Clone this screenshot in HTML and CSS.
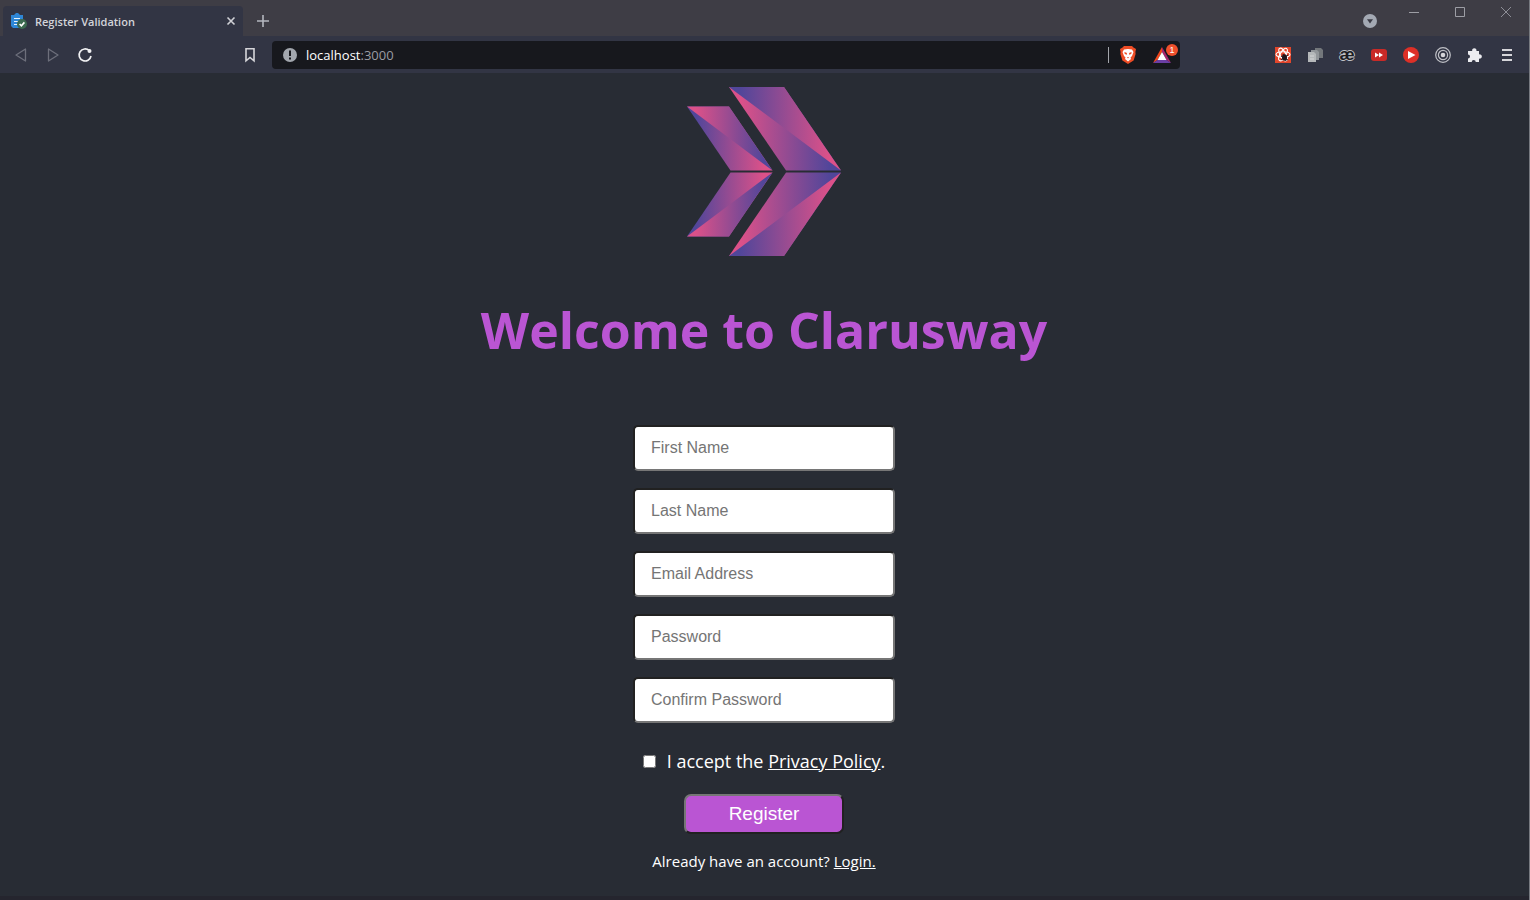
FILE: index.html
```html
<!DOCTYPE html>
<html lang="en">
<head>
<meta charset="utf-8">
<meta name="viewport" content="width=device-width, initial-scale=1">
<title>Register Validation</title>
<link rel="stylesheet" href="styles.css">
</head>
<body>
<div class="window">
  <header class="tabstrip">
    <div class="tab">
      <svg class="tab-icon" width="18" height="18" viewBox="0 0 18 18" aria-hidden="true">
        <path d="M1 3h3l2-2h2l2 2h3v13H3L1 14z" fill="#2f87d6"/>
        <path d="M4 6h6v1H4zM4 9h5v1H4zM4 12h4v1H4z" fill="#e8f2fb"/>
        <circle cx="12" cy="12" r="5" fill="#3c6b50"/>
        <path d="M9.600 12l1.800 1.800 3-3.400" fill="none" stroke="#fff" stroke-width="1.600"/>
      </svg>
      <span class="tab-title">Register Validation</span>
      <button class="icon-button tab-close" aria-label="Close tab">
        <svg width="10" height="10" viewBox="0 0 10 10"><path d="M1.500 1.500l7 7M8.500 1.500l-7 7" stroke="#d0d1d6" stroke-width="1.600"/></svg>
      </button>
    </div>
    <button class="icon-button new-tab" aria-label="New tab">
      <svg width="12" height="12" viewBox="0 0 12 12"><path d="M6 0v12M0 6h12" stroke="#b4b7bf" stroke-width="1.600"/></svg>
    </button>
    <button class="icon-button tab-search" aria-label="Search tabs">
      <svg width="14" height="14" viewBox="0 0 14 14"><circle cx="7" cy="7" r="7" fill="#a3a9b3"/><path d="M4 5.300h6L7 9.500z" fill="#3a3b45"/></svg>
    </button>
    <div class="window-controls">
      <button class="icon-button" aria-label="Minimize"><svg width="12" height="12" viewBox="0 0 12 12"><path d="M1 6.500h10" stroke="#9d9ea5"/></svg></button>
      <button class="icon-button" aria-label="Maximize"><svg width="12" height="12" viewBox="0 0 12 12"><path d="M1.500 1.500h9v9h-9z" fill="none" stroke="#9d9ea5"/></svg></button>
      <button class="icon-button" aria-label="Close window"><svg width="12" height="12" viewBox="0 0 12 12"><path d="M1 1l10 10M11 1L1 11" stroke="#8d8e96"/></svg></button>
    </div>
  </header>

  <nav class="toolbar" aria-label="Browser toolbar">
    <button class="icon-button tool" aria-label="Back"><svg width="14" height="16" viewBox="0 0 14 16"><path d="M11.500 2v12L2 8z" fill="none" stroke="#6d6f7b" stroke-width="1.300" stroke-linejoin="round"/></svg></button>
    <button class="icon-button tool" aria-label="Forward"><svg width="14" height="16" viewBox="0 0 14 16"><path d="M2.500 2v12L12 8z" fill="none" stroke="#6d6f7b" stroke-width="1.300" stroke-linejoin="round"/></svg></button>
    <button class="icon-button tool" aria-label="Reload"><svg width="16" height="16" viewBox="0 0 16 16"><path d="M12.300 3.700A6 6 0 1 0 14 9" fill="none" stroke="#f1f1f3" stroke-width="1.700"/><circle cx="12.500" cy="4" r="2" fill="#f1f1f3"/></svg></button>
    <button class="icon-button tool bookmark" aria-label="Bookmark"><svg width="12" height="16" viewBox="0 0 12 16"><path d="M2 1.800h8v12L6 10.500 2 13.800z" fill="none" stroke="#d6d6da" stroke-width="1.600"/></svg></button>
    <div class="address">
      <svg width="14" height="14" viewBox="0 0 14 14" aria-hidden="true"><circle cx="7" cy="7" r="7" fill="#a3a7ae"/><path d="M7 2.500v5.500M7 9.500v2" stroke="#17181d" stroke-width="2"/></svg>
      <a class="url" href="#"><span class="host">localhost</span>:3000</a>
      <span class="divider"></span>
      <button class="icon-button shield" aria-label="Shields">
        <svg width="16" height="18" viewBox="0 0 16 18"><path d="M4 0h8l1.500 1.500L16 3l-.6 3 .2 2-2 6.500L8 18l-5.600-3.500-2-6.500.2-2L0 3l2.500-1.500z" fill="#ed4c25"/><path d="M4 3.500L8 3l4 .5L13.500 6 12 10l-1.500 1.500.5 1.500L8 15.500 5 13l.5-1.500L4 10 2.500 6z" fill="#fff"/><path d="M4.500 6L7 7 6.500 9l-2-1.500zM11.500 6L9 7 9.500 9l2-1.500zM7 11h2l-1 1.500z" fill="#ed4c25"/></svg>
      </button>
      <button class="icon-button rewards" aria-label="Rewards, 1 new">
        <svg width="18" height="16" viewBox="0 0 18 16"><path d="M9 0L0 16l4.500-3L9 5z" fill="#f0471c"/><path d="M9 0l9 16-4.500-3L9 5z" fill="#a6266e"/><path d="M0 16h18l-4.500-3h-9z" fill="#6b3fa4"/><path d="M9 5l4.500 8h-9z" fill="#fff"/></svg>
        <span class="badge">1</span>
      </button>
    </div>
    <div class="extensions">
      <button class="icon-button tool" aria-label="React tools"><svg width="16" height="16" viewBox="0 0 16 16"><path d="M0 0h16v16H0z" fill="#e2462b"/><g fill="none" stroke="#fff" stroke-width="1.100"><ellipse cx="8" cy="7.500" rx="7" ry="2.800"/><ellipse cx="8" cy="7.500" rx="7" ry="2.800" transform="rotate(60 8 7.500)"/><ellipse cx="8" cy="7.500" rx="7" ry="2.800" transform="rotate(120 8 7.500)"/></g><ellipse cx="9.500" cy="10.500" rx="2.500" ry="3.200" fill="#20151a"/><path d="M6 9l7 4M6 13l7-5M8 7l3 7" stroke="#20151a"/></svg></button>
      <button class="icon-button tool" aria-label="Copy pages"><svg width="16" height="16" viewBox="0 0 16 16"><path d="M8 1h6l2 2v8H8z" fill="#73777b"/><path d="M4 3h6l2 2v8H4z" fill="#92969a"/><path d="M1 5h6l2 2v8H1z" fill="#b5b8ba"/><path d="M3 9h4M3 12h4" stroke="#d5d6d7"/></svg></button>
      <button class="icon-button tool ligature" aria-label="Text tools">æ</button>
      <button class="icon-button tool" aria-label="Fast forward"><svg width="16" height="12" viewBox="0 0 16 12"><rect width="16" height="12" rx="3" fill="#c92a27"/><path d="M4 3.500l4 2.500-4 2.500zM8 3.500l4 2.500-4 2.500z" fill="#fff"/></svg></button>
      <button class="icon-button tool" aria-label="Video player"><svg width="16" height="16" viewBox="0 0 16 16"><circle cx="8" cy="8" r="8" fill="#dd3027"/><path d="M5 4l7.500 4L5 12z" fill="#fff"/></svg></button>
      <button class="icon-button tool" aria-label="Tracker"><svg width="16" height="16" viewBox="0 0 16 16"><g fill="none" stroke="#bfc0c6" stroke-width="1.200"><circle cx="8" cy="8" r="7.300"/><circle cx="8" cy="8" r="4.600"/></g><circle cx="8" cy="8" r="2.300" fill="#d5d5d9"/></svg></button>
      <button class="icon-button tool" aria-label="Extensions"><svg width="16" height="16" viewBox="0 0 16 16"><path d="M1 4h4.200a2.200 2.200 0 1 1 4.200 0H12v3.400a2.200 2.200 0 1 1 0 4.200V15H8.700a2 2 0 0 0-4 0H1v-3.600a2 2 0 0 0 0-4z" fill="#ececf0"/></svg></button>
      <button class="icon-button tool" aria-label="Menu"><svg width="10" height="12" viewBox="0 0 10 12"><path d="M0 1h10M0 6h10M0 11h10" stroke="#d6d6da" stroke-width="1.800"/></svg></button>
    </div>
  </nav>

  <main class="page">
    <svg class="logo" width="154" height="170" viewBox="0 0 154 170" role="img" aria-label="Clarusway">
      <defs>
        <linearGradient id="cool-warm"><stop offset=".1" stop-color="#51469a"/><stop offset=".9" stop-color="#dc5189"/></linearGradient>
        <linearGradient id="warm-cool"><stop offset=".1" stop-color="#dc5189"/><stop offset=".9" stop-color="#51469a"/></linearGradient>
        <g id="upper">
          <path d="M42 0h55l57 83.500H99z" fill="url(#warm-cool)"/>
          <path d="M42 0h55l57 83.500z" fill="url(#cool-warm)"/>
          <path d="M0 19.500h42l43.500 64h-42z" fill="url(#cool-warm)"/>
          <path d="M0 19.500h42l43.500 64z" fill="url(#warm-cool)"/>
        </g>
      </defs>
      <use href="#upper"/>
      <use href="#upper" transform="matrix(1 0 0 -1 0 169)"/>
    </svg>
    <h1 class="title">Welcome to Clarusway</h1>
    <form class="form">
      <input class="field" type="text" placeholder="First Name" aria-label="First Name">
      <input class="field" type="text" placeholder="Last Name" aria-label="Last Name">
      <input class="field" type="email" placeholder="Email Address" aria-label="Email Address">
      <input class="field" type="password" placeholder="Password" aria-label="Password">
      <input class="field" type="password" placeholder="Confirm Password" aria-label="Confirm Password">
      <div class="accept">
        <input class="check" type="checkbox" id="accept">
        <label for="accept">I accept the <a href="#">Privacy Policy</a>.</label>
      </div>
      <button class="register" type="submit">Register</button>
    </form>
    <p class="login">Already have an account? <a href="#">Login.</a></p>
  </main>
</div>
</body>
</html>
```
FILE: styles.css
```css
* {
  box-sizing: border-box;
}

body {
  margin: 0;
  background: #282c34;
  color: #fff;
  font-family: "Open Sans", "Noto Sans", sans-serif;
}

.window {
  display: flex;
  flex-direction: column;
  min-height: 100vh;
  border-right: 1px solid #777a80;
}

.icon-button {
  display: flex;
  align-items: center;
  justify-content: center;
  padding: 0;
  border: 0;
  background: none;
  color: inherit;
}

.tabstrip {
  display: flex;
  height: 36px;
  padding-left: 3px;
  background: #3e3d45;
}

.tab {
  display: flex;
  align-items: center;
  width: 240px;
  margin-top: 6px;
  padding: 0 7px;
  border-radius: 4px 4px 0 0;
  background: #323544;
}

.tab-title {
  flex: 1;
  margin-left: 7px;
  color: #d3d4da;
  font-size: 11px;
  font-weight: 600;
}

.new-tab {
  width: 40px;
  padding-top: 6px;
}

.tab-search {
  width: 42px;
  margin-left: auto;
  padding-top: 6px;
}

.window-controls {
  display: flex;
  height: 24px;
}

.window-controls .icon-button {
  width: 46px;
}

.toolbar {
  display: flex;
  align-items: center;
  height: 37px;
  padding: 0 6px 0 5px;
  background: #323544;
}

.tool {
  width: 32px;
  height: 32px;
}

.bookmark {
  margin-left: 133px;
}

.address {
  display: flex;
  flex: 1;
  align-items: center;
  height: 28px;
  margin: 0 87px 0 6px;
  padding: 0 8px 0 11px;
  border-radius: 4px;
  background: #17181d;
}

.url {
  flex: 1;
  margin-left: 9px;
  color: #9a9ca3;
  font-size: 13px;
  text-decoration: none;
}

.host {
  color: #fff;
}

.divider {
  width: 1px;
  height: 16px;
  background: #a3a5ab;
}

.shield {
  margin-left: 11px;
}

.rewards {
  position: relative;
  margin-left: 17px;
  padding-right: 1px;
}

.badge {
  position: absolute;
  top: -3px;
  right: -6px;
  width: 12px;
  height: 12px;
  border-radius: 50%;
  background: #f0502c;
  color: #fff;
  font-size: 9px;
  line-height: 12px;
  text-align: center;
}

.extensions {
  display: flex;
}

.ligature {
  color: #1c1d24;
  font-family: "Liberation Sans", sans-serif;
  font-size: 17px;
  font-weight: 700;
  text-shadow: 1px 0 #c0c1c6, -1px 0 #c0c1c6, 0 1px #c0c1c6, 0 -1px #c0c1c6;
}

.page {
  display: flex;
  flex: 1;
  flex-direction: column;
  align-items: center;
  padding: 14px 1px 0 0;
  border-bottom: 4px solid #25252e;
}

.title {
  margin: 37px 16px 0;
  color: #ba55d3;
  font-size: 50px;
  font-weight: 700;
  line-height: 72px;
  text-align: center;
}

.form {
  display: flex;
  flex-direction: column;
  align-items: center;
  margin-top: 59px;
}

.field {
  width: 262px;
  height: 46px;
  margin-bottom: 17px;
  padding: 0 16px;
  border: 2px inset #767676;
  border-radius: 5px;
  background: #fff;
  color: #222;
  font-family: "Liberation Sans", Arial, sans-serif;
  font-size: 16px;
}

.field::placeholder {
  color: #757575;
}

.accept {
  display: flex;
  align-items: center;
  margin-top: 8px;
  font-size: 18px;
  line-height: 26px;
}

.check {
  width: 13px;
  height: 13px;
  margin: 0 11px 0 0;
}

.accept a,
.login a {
  color: inherit;
}

.register {
  width: 160px;
  height: 40px;
  margin-top: 20px;
  border: 2px outset #767676;
  border-radius: 7px;
  background: #ba55d3;
  color: #fff;
  font-family: "Liberation Sans", Arial, sans-serif;
  font-size: 19px;
}

.login {
  margin: 15px 0 0;
  font-size: 15px;
  line-height: 24px;
}
```
